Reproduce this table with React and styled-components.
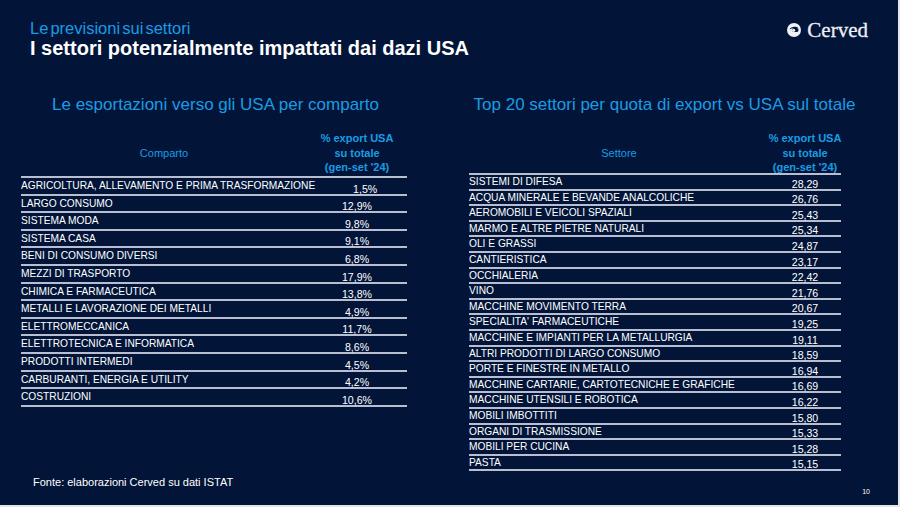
import React from "react";
import styled, { createGlobalStyle } from "styled-components";

const GlobalStyle = createGlobalStyle`
  html, body {
    margin: 0;
    padding: 0;
    background: #e4e5ea;
  }
  body {
    font-family: "Liberation Sans", Arial, sans-serif;
  }
`;

const Slide = styled.div`
  width: 898px;
  height: 505px;
  background: #021539;
  color: #fff;
  display: flex;
  flex-direction: column;
  box-sizing: border-box;
`;

const Header = styled.header`
  display: flex;
  justify-content: space-between;
  align-items: flex-start;
  padding: 19px 30px 0 30px;
`;

const Kicker = styled.div`
  font-size: 16.5px;
  line-height: 18px;
  color: #1b9ce2;
  word-spacing: -2.5px;
`;

const Title = styled.h1`
  margin: 0;
  font-size: 20px;
  line-height: 22px;
  font-weight: 700;
`;

const Logo = styled.div`
  display: flex;
  align-items: center;
  gap: 6px;
  margin-top: -1px;
`;

const LogoText = styled.span`
  font-family: "Liberation Serif", "Times New Roman", serif;
  font-size: 21px;
  line-height: 24px;
  color: #eef0f5;
  -webkit-text-stroke: 0.3px #eef0f5;
`;

const Columns = styled.main`
  display: grid;
  grid-template-columns: 389px 391px;
  column-gap: 59px;
  padding-left: 21px;
  margin-top: 36px;
`;

const Column = styled.section``;

const SectionTitle = styled.h2`
  margin: 0;
  font-weight: 400;
  font-size: 17px;
  line-height: 20px;
  color: #1b9ce2;
  text-align: center;
  white-space: nowrap;
`;

const Table = styled.div`
  width: ${(p) => p.$width}px;
  margin-top: 16px;
`;

const HeadRow = styled.div`
  display: grid;
  grid-template-columns: 1fr ${(p) => p.$valueCol}px;
  height: ${(p) => p.$height}px;
  border-bottom: 2px solid #b9bdd0;
  color: #1b9ce2;
  font-size: 11px;
  line-height: 14.5px;
`;

const HeadLabel = styled.div`
  align-self: center;
  text-align: center;
`;

const HeadValue = styled.div`
  display: flex;
  flex-direction: column;
  align-items: center;
  font-weight: 700;
  white-space: nowrap;
`;

const Row = styled.div`
  display: grid;
  grid-template-columns: 1fr ${(p) => p.$valueCol}px;
  height: ${(p) => p.$height}px;
  box-sizing: border-box;
  border-bottom: 2px solid #b9bdd0;
`;

const Label = styled.div`
  align-self: start;
  padding-top: ${(p) => p.$top}px;
  font-size: 10.2px;
  line-height: 12px;
  white-space: nowrap;
`;

const Value = styled.div`
  align-self: end;
  text-align: center;
  font-size: 10.6px;
  line-height: 10px;
`;

const Footer = styled.footer`
  margin-top: auto;
  display: flex;
  justify-content: space-between;
  padding: 0 28px 0 33px;
  height: 29px;
`;

const Source = styled.p`
  margin: 0;
  font-size: 11px;
  line-height: 13px;
`;

const PageNum = styled.span`
  font-size: 7px;
  line-height: 8px;
  margin-top: 11.6px;
`;

const comparti = [
  ["AGRICOLTURA, ALLEVAMENTO E PRIMA TRASFORMAZIONE", "1,5%"],
  ["LARGO CONSUMO", "12,9%"],
  ["SISTEMA MODA", "9,8%"],
  ["SISTEMA CASA", "9,1%"],
  ["BENI DI CONSUMO DIVERSI", "6,8%"],
  ["MEZZI DI TRASPORTO", "17,9%"],
  ["CHIMICA E FARMACEUTICA", "13,8%"],
  ["METALLI E LAVORAZIONE DEI METALLI", "4,9%"],
  ["ELETTROMECCANICA", "11,7%"],
  ["ELETTROTECNICA E INFORMATICA", "8,6%"],
  ["PRODOTTI INTERMEDI", "4,5%"],
  ["CARBURANTI, ENERGIA E UTILITY", "4,2%"],
  ["COSTRUZIONI", "10,6%"],
];

const settori = [
  ["SISTEMI DI DIFESA", "28,29"],
  ["ACQUA MINERALE E BEVANDE ANALCOLICHE", "26,76"],
  ["AEROMOBILI E VEICOLI SPAZIALI", "25,43"],
  ["MARMO E ALTRE PIETRE NATURALI", "25,34"],
  ["OLI E GRASSI", "24,87"],
  ["CANTIERISTICA", "23,17"],
  ["OCCHIALERIA", "22,42"],
  ["VINO", "21,76"],
  ["MACCHINE MOVIMENTO TERRA", "20,67"],
  ["SPECIALITA' FARMACEUTICHE", "19,25"],
  ["MACCHINE E IMPIANTI PER LA METALLURGIA", "19,11"],
  ["ALTRI PRODOTTI DI LARGO CONSUMO", "18,59"],
  ["PORTE E FINESTRE IN METALLO", "16,94"],
  ["MACCHINE CARTARIE, CARTOTECNICHE E GRAFICHE", "16,69"],
  ["MACCHINE UTENSILI E ROBOTICA", "16,22"],
  ["MOBILI IMBOTTITI", "15,80"],
  ["ORGANI DI TRASMISSIONE", "15,33"],
  ["MOBILI PER CUCINA", "15,28"],
  ["PASTA", "15,15"],
];

function CervedMark() {
  return (
    <svg width="14" height="14" viewBox="0 0 14 14">
      <circle cx="7" cy="7" r="7" fill="#eef0f5" />
      <path
        d="M2.6 6.6 C3.4 3.6 9.6 2.8 11.6 5.4 C10.6 4.9 9.4 5 8.6 5.6 C7.2 4.6 4.8 4.8 2.6 6.6 Z"
        fill="#021539"
      />
      <ellipse cx="8.2" cy="6.9" rx="3.3" ry="2.2" fill="#021539" />
      <circle cx="6.6" cy="7.3" r="1.6" fill="#eef0f5" />
    </svg>
  );
}

function DataTable({ label, rows, width, valueCol, headHeight, rowHeight, labelTop }) {
  return (
    <Table $width={width}>
      <HeadRow $valueCol={valueCol} $height={headHeight}>
        <HeadLabel>{label}</HeadLabel>
        <HeadValue>
          <span>% export USA</span>
          <span>su totale</span>
          <span>(gen-set '24)</span>
        </HeadValue>
      </HeadRow>
      {rows.map(([name, value]) => (
        <Row key={name} $valueCol={valueCol} $height={rowHeight}>
          <Label $top={labelTop}>{name}</Label>
          <Value>{value}</Value>
        </Row>
      ))}
    </Table>
  );
}

export default function App() {
  return (
    <>
      <GlobalStyle />
      <Slide>
        <Header>
          <div>
            <Kicker>Le previsioni sui settori</Kicker>
            <Title>I settori potenzialmente impattati dai dazi USA</Title>
          </div>
          <Logo>
            <CervedMark />
            <LogoText>Cerved</LogoText>
          </Logo>
        </Header>
        <Columns>
          <Column>
            <SectionTitle>Le esportazioni verso gli USA per comparto</SectionTitle>
            <DataTable
              label="Comparto"
              rows={comparti}
              width={386}
              valueCol={100}
              headHeight={45}
              rowHeight={17.6}
              labelTop={2}
            />
          </Column>
          <Column>
            <SectionTitle>Top 20 settori per quota di export vs USA sul totale</SectionTitle>
            <DataTable
              label="Settore"
              rows={settori}
              width={372}
              valueCol={72}
              headHeight={42}
              rowHeight={15.6}
              labelTop={1}
            />
          </Column>
        </Columns>
        <Footer>
          <Source>Fonte: elaborazioni Cerved su dati ISTAT</Source>
          <PageNum>10</PageNum>
        </Footer>
      </Slide>
    </>
  );
}
